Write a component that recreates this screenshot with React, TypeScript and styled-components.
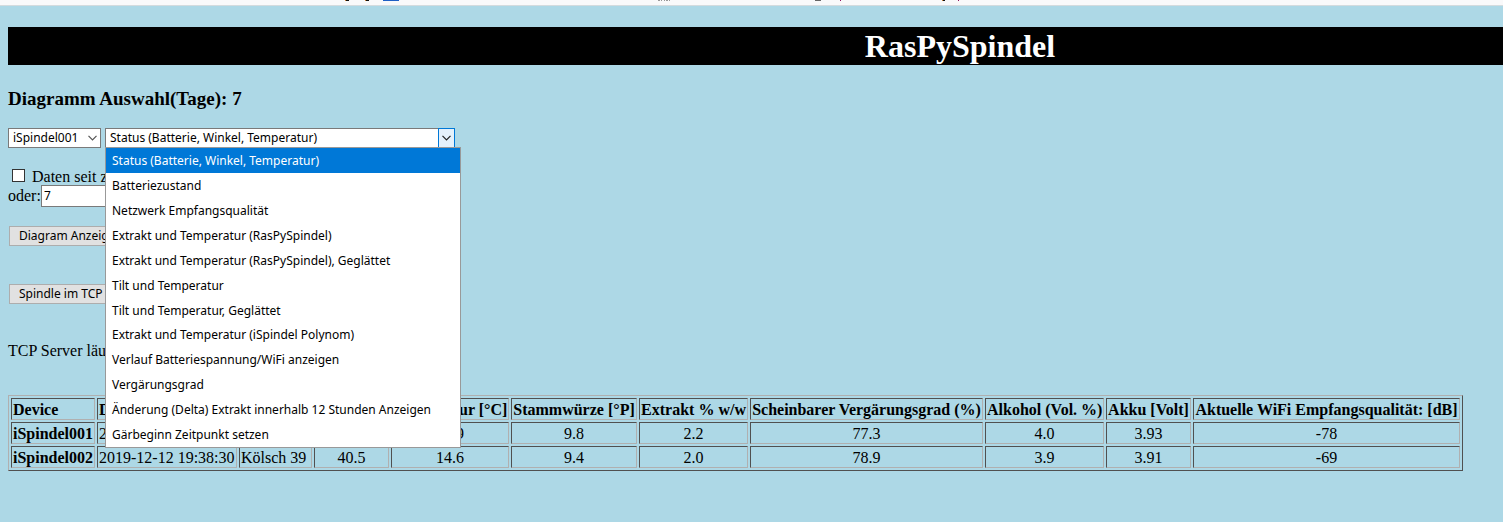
import React from "react";
import styled, { createGlobalStyle } from "styled-components";

const uiFont = `"Noto Sans", "DejaVu Sans", sans-serif`;

const GlobalStyle = createGlobalStyle`
  * { box-sizing: border-box; }
  body {
    margin: 0;
    min-height: 100vh;
    overflow-x: hidden;
    background: #add8e6;
    color: #000;
    font-family: "Liberation Serif", serif;
    font-size: 16px;
    line-height: 20px;
  }
`;

const Toolbar = styled.div`
  height: 6px;
  overflow: hidden;
  background: #f9f9fa;
  border-bottom: 1px solid #d4dbde;
  svg { display: block; }
`;

const Page = styled.main`
  padding: 21px 0 48px 8px;
`;

const Title = styled.h1`
  margin: 0;
  padding-left: 409px;
  background: #000;
  color: #fff;
  font-size: 32px;
  line-height: 38px;
  text-align: center;
`;

const Subtitle = styled.h3`
  margin: 22px 0 17px;
  font-size: 19px;
  line-height: 24px;
`;

const Pickers = styled.div`
  display: flex;
  gap: 4px;
  height: 20px;
`;

const Picker = styled.div<{ $width: number }>`
  position: relative;
  width: ${(p) => p.$width}px;
`;

const Select = styled.select`
  appearance: none;
  display: block;
  width: 100%;
  height: 20px;
  padding: 0 4px;
  border: 1px solid #7a7a7a;
  border-radius: 0;
  background: #fff;
  color: #000;
  font-family: ${uiFont};
  font-size: 12px;
  line-height: 18px;
`;

const Arrow = styled.span<{ $active?: boolean }>`
  position: absolute;
  top: 0;
  right: 0;
  display: flex;
  align-items: center;
  justify-content: center;
  width: 17px;
  height: 20px;
  pointer-events: none;
  border: 1px solid ${(p) => (p.$active ? "#0078d7" : "transparent")};
  background: ${(p) => (p.$active ? "#e5f1fb" : "transparent")};
  color: ${(p) => (p.$active ? "#222" : "#555")};
`;

const OptionList = styled.ul`
  position: absolute;
  z-index: 1;
  top: 19px;
  left: 0;
  display: flex;
  flex-direction: column;
  width: 356px;
  height: 301px;
  margin: 0;
  padding: 0;
  border: 1px solid #999;
  background: #fff;
  list-style: none;
  font-family: ${uiFont};
  font-size: 12px;
  line-height: 25px;
`;

const Option = styled.li<{ $selected: boolean }>`
  flex: 1 1 0;
  min-height: 0;
  padding-left: 6px;
  white-space: nowrap;
  background: ${(p) => (p.$selected ? "#0078d7" : "transparent")};
  color: ${(p) => (p.$selected ? "#fff" : "#000")};
`;

const Period = styled.div`
  margin-top: 19px;
`;

const Line = styled.div`
  display: flex;
  align-items: center;
  height: 19px;
`;

const Check = styled.input`
  appearance: none;
  width: 13px;
  height: 13px;
  margin: 0 7px 2px 4px;
  border: 1px solid #333;
  background: #fff;
`;

const DaysInput = styled.input`
  width: 150px;
  height: 22px;
  padding: 0 2px;
  border: 1px solid #7a7a7a;
  font-family: ${uiFont};
  font-size: 12px;
`;

const Button = styled.button<{ $gap: number }>`
  display: block;
  height: 20px;
  margin: ${(p) => p.$gap}px 0 0 1px;
  padding: 0 9px;
  border: 1px solid #adadad;
  background: #e1e1e1;
  color: #000;
  font-family: ${uiFont};
  font-size: 12px;
  line-height: 18px;
`;

const ServerState = styled.p`
  margin: 37px 0 34px;
`;

const Table = styled.table`
  table-layout: fixed;
  width: 1455px;
  border: 1px solid;
  border-color: #b0b0b0 #505050 #505050 #b0b0b0;
  border-collapse: separate;
  border-spacing: 2px;
  line-height: 18px;
  white-space: nowrap;
`;

const cell = `
  padding: 2px 1px 0;
  border: 1px solid;
  border-color: #505050 #b0b0b0 #b0b0b0 #505050;
`;

const Th = styled.th<{ $left?: boolean }>`
  ${cell}
  text-align: ${(p) => (p.$left ? "left" : "center")};
`;

const Td = styled.td<{ $left?: boolean }>`
  ${cell}
  text-align: ${(p) => (p.$left ? "left" : "center")};
`;

const options = [
  "Status (Batterie, Winkel, Temperatur)",
  "Batteriezustand",
  "Netzwerk Empfangsqualität",
  "Extrakt und Temperatur (RasPySpindel)",
  "Extrakt und Temperatur (RasPySpindel), Geglättet",
  "Tilt und Temperatur",
  "Tilt und Temperatur, Geglättet",
  "Extrakt und Temperatur (iSpindel Polynom)",
  "Verlauf Batteriespannung/WiFi anzeigen",
  "Vergärungsgrad",
  "Änderung (Delta) Extrakt innerhalb 12 Stunden Anzeigen",
  "Gärbeginn Zeitpunkt setzen",
];

const columns = [
  { label: "Device", width: 84 },
  { label: "Datum", width: 140 },
  { label: "Sudname", width: 73 },
  { label: "Winkel [°]", width: 75 },
  { label: "Temperatur [°C]", width: 118 },
  { label: "Stammwürze [°P]", width: 126 },
  { label: "Extrakt % w/w", width: 109 },
  { label: "Scheinbarer Vergärungsgrad (%)", width: 233 },
  { label: "Alkohol (Vol. %)", width: 119 },
  { label: "Akku [Volt]", width: 85 },
  { label: "Aktuelle WiFi Empfangsqualität: [dB]", width: 0 },
];

const rows = [
  ["iSpindel001", "2019-12-12 19:40:12", "Kölsch 38", "39.8", "14.9", "9.8", "2.2", "77.3", "4.0", "3.93", "-78"],
  ["iSpindel002", "2019-12-12 19:38:30", "Kölsch 39", "40.5", "14.6", "9.4", "2.0", "78.9", "3.9", "3.91", "-69"],
];

const Chevron = () => (
  <svg width="9" height="6" viewBox="0 0 9 6" fill="none" stroke="currentColor" strokeWidth="1.2" aria-hidden="true">
    <path d="M0.5 0.8 L4.5 4.8 L8.5 0.8" />
  </svg>
);

export default function App() {
  return (
    <>
      <GlobalStyle />
      <Toolbar>
        <svg width="1000" height="1" aria-hidden="true" shapeRendering="crispEdges">
          <path d="M346 0h3v1h-3zM366 0h3v1h-3zM943 0h2v1h-2z" fill="#111" />
          <path d="M345 0h1v1h-1zM365 0h1v1h-1zM942 0h1v1h-1z" fill="#d08030" />
          <path d="M383 0h16v1h-16z" fill="#1f5fc4" />
          <path d="M658 0h2v1h-2zM661 0h1v1h-1zM664 0h1v1h-1zM666 0h2v1h-2zM669 0h1v1h-1z" fill="#999" />
          <path d="M815 0h6v1h-6z" fill="#666" />
          <path d="M840 0h1v1h-1zM958 0h1v1h-1z" fill="#90105f" />
        </svg>
      </Toolbar>
      <Page>
        <Title>RasPySpindel</Title>
        <Subtitle>Diagramm Auswahl(Tage): 7</Subtitle>
        <Pickers>
          <Picker $width={93}>
            <Select aria-label="Spindel" defaultValue="iSpindel001">
              <option>iSpindel001</option>
              <option>iSpindel002</option>
            </Select>
            <Arrow><Chevron /></Arrow>
          </Picker>
          <Picker $width={350}>
            <Select aria-label="Diagramm" defaultValue={options[0]}>
              {options.map((o) => <option key={o}>{o}</option>)}
            </Select>
            <Arrow $active><Chevron /></Arrow>
            <OptionList role="listbox" aria-label="Diagramm">
              {options.map((o, i) => (
                <Option key={o} role="option" aria-selected={i === 0} $selected={i === 0}>{o}</Option>
              ))}
            </OptionList>
          </Picker>
        </Pickers>
        <Period>
          <Line>
            <Check type="checkbox" id="reset" />
            <label htmlFor="reset">Daten seit zuletzt gesetztem Reset</label>
          </Line>
          <Line>
            <label htmlFor="days">oder:</label>
            <DaysInput id="days" defaultValue="7" />
          </Line>
        </Period>
        <Button type="button" $gap={21}>Diagram Anzeigen</Button>
        <Button type="button" $gap={38}>Spindle im TCP Server</Button>
        <ServerState>TCP Server läuft</ServerState>
        <Table>
          <colgroup>
            {columns.map((c) => <col key={c.label} style={c.width ? { width: c.width } : undefined} />)}
          </colgroup>
          <thead>
            <tr>{columns.map((c, i) => <Th key={c.label} scope="col" $left={i === 0 || i === 1}>{c.label}</Th>)}</tr>
          </thead>
          <tbody>
            {rows.map((r) => (
              <tr key={r[0]}>
                {r.map((v, i) => i === 0
                  ? <Th key={i} scope="row" $left>{v}</Th>
                  : <Td key={i} $left={i < 3}>{v}</Td>)}
              </tr>
            ))}
          </tbody>
        </Table>
      </Page>
    </>
  );
}
